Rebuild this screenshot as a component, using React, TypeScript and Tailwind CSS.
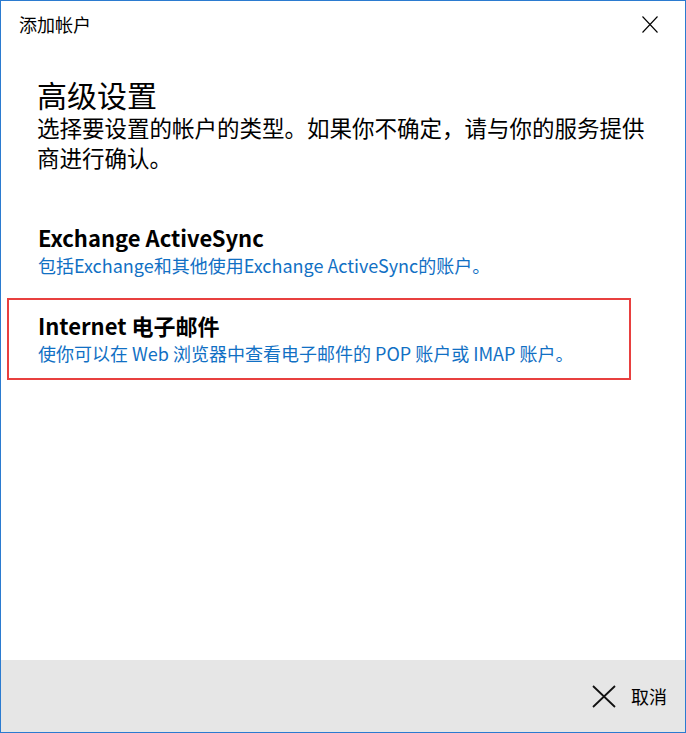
import React from "react";

const FONT = '"Segoe UI", "Noto Sans CJK SC", "Noto Sans", sans-serif';

function Item({
  title,
  desc,
  selected,
}: {
  title: string;
  desc: string;
  selected?: boolean;
}) {
  return (
    <div
      className={`mx-[6px] w-[624px] border-2 pl-[29px] pt-[11px] pb-[12px] ${
        selected ? "border-[#e8403f]" : "border-transparent"
      }`}
    >
      <div className="text-[22px] leading-[28px] font-bold text-black">{title}</div>
      <div className="text-[18px] leading-[26px] text-[#1170c4] mt-[1px]">{desc}</div>
    </div>
  );
}

export default function App() {
  return (
    <div
      className="w-[686px] h-[733px] border border-[#2b7bd0] bg-white flex flex-col overflow-hidden"
      style={{ fontFamily: FONT }}
    >
      <div className="flex items-start justify-between pl-[18px] pr-[27px] pt-[11px]">
        <div className="text-[18px] leading-[24px] text-black">添加帐户</div>
        <svg width="16" height="17" viewBox="0 0 16 17" className="mt-[4px]">
          <path d="M0.5 0.5 L15.5 16.5 M15.5 0.5 L0.5 16.5" stroke="#000" strokeWidth="1.1" fill="none" />
        </svg>
      </div>

      <div className="flex-1 flex flex-col">
        <div className="pl-[36px] pt-[40px] pr-[30px]">
          <div className="text-[30px] leading-[36px] text-black">高级设置</div>
          <div className="text-[22.5px] leading-[30px] text-black">
            选择要设置的帐户的类型。如果你不确定，请与你的服务提供商进行确认。
          </div>
        </div>
        <div className="mt-[38px] flex flex-col gap-[6px]">
          <Item
            title="Exchange ActiveSync"
            desc="包括Exchange和其他使用Exchange ActiveSync的账户。"
          />
          <Item
            title="Internet 电子邮件"
            desc="使你可以在 Web 浏览器中查看电子邮件的 POP 账户或 IMAP 账户。"
            selected
          />
        </div>
      </div>

      <div className="h-[72px] bg-[#e6e6e6] flex items-center justify-end pr-[18px]">
        <div className="flex items-center gap-[15px]">
          <svg width="24" height="23" viewBox="0 0 24 23">
            <path d="M1 1 L23 22 M23 1 L1 22" stroke="#111" strokeWidth="1.8" fill="none" />
          </svg>
          <span className="text-[18px] leading-[24px] text-black">取消</span>
        </div>
      </div>
    </div>
  );
}
